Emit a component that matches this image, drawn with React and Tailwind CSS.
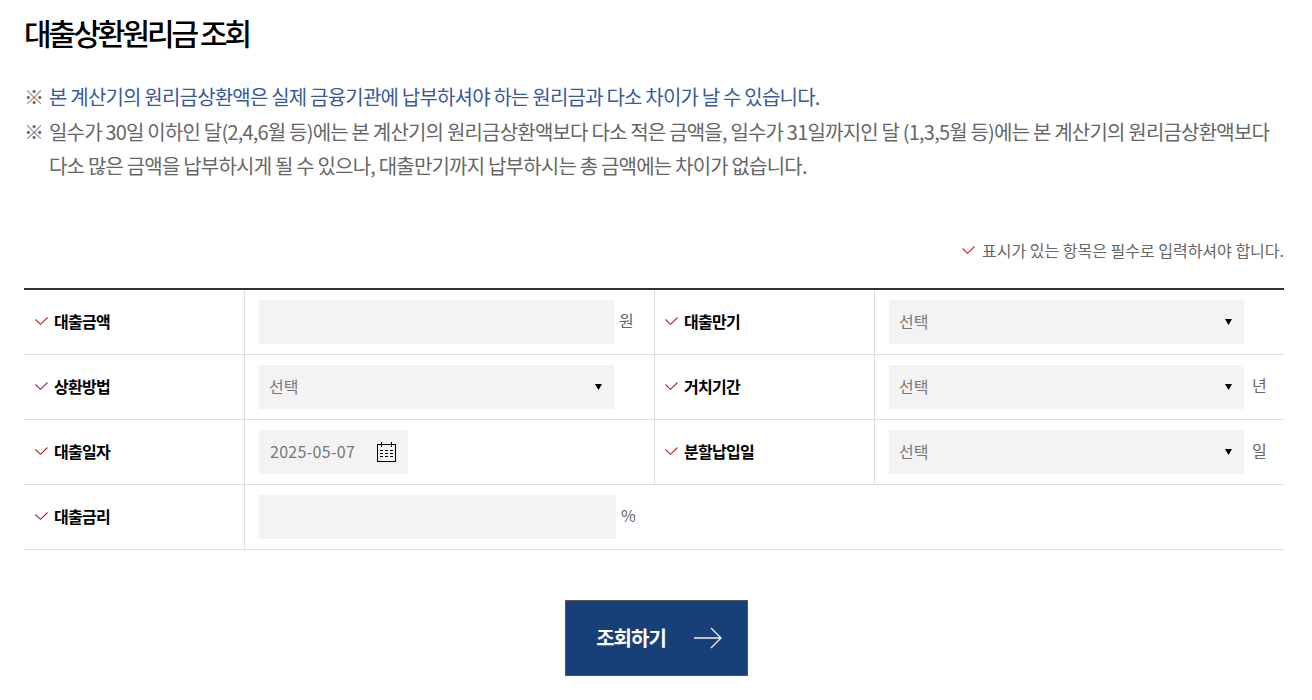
import React from 'react';

const font = 'font-["Noto_Sans_CJK_KR","Noto_Sans",sans-serif]';

const Check = ({ className = '' }) => (
  <svg width="13" height="8" viewBox="0 0 13 8" fill="none" className={className}>
    <path d="M0.5 2.5 L5.5 7.3 L12.5 0.5" stroke="#b0222c" strokeWidth="1.1" />
  </svg>
);

const Label = ({ children, right }) => (
  <div className={`flex items-center gap-[6px] border-r border-b border-[#dddddd] ${right ? 'pl-[10px]' : 'pl-[11px]'}`}>
    <Check className="-mt-[2px]" />
    <span className="text-[16px] -mt-[2px] font-bold text-black tracking-[-0.7px]">{children}</span>
  </div>
);

const Select = ({ width }) => (
  <div className={`${width} h-[44px] bg-[#f3f3f3] flex items-center justify-between pl-[10px] pr-[12px]`}>
    <span className="text-[16px] -mt-[2px] text-[#777777]">선택</span>
    <svg width="7" height="6" viewBox="0 0 7 6"><path d="M0 0 H7 L3.5 6 Z" fill="#000" /></svg>
  </div>
);

const CalendarIcon = () => (
  <svg width="20" height="20" viewBox="0 0 20 20" fill="none" stroke="#000">
    <rect x="0.5" y="2.5" width="18" height="17" />
    <path d="M4.5 0 V5 M14.5 0 V5" />
    <path d="M3 8.5 H6 M8 8.5 H11 M13 8.5 H16 M3 11.5 H6 M8 11.5 H11 M13 11.5 H16 M3 14.5 H6 M8 14.5 H11 M13 14.5 H16" />
  </svg>
);

const Cell = ({ children, border }) => (
  <div className={`flex items-center pl-[14px] border-b border-[#dddddd] ${border ? 'border-r' : ''}`}>
    {children}
  </div>
);

const Unit = ({ children, className = '' }) => (
  <span className={`text-[16px] text-[#666666] -mt-[4px] ${className}`}>{children}</span>
);

export default function App() {
  return (
    <div className={`${font} bg-white h-[700px] overflow-hidden pl-6 pr-[28px]`}>
      <h1 className="pt-[10px] text-[30px] leading-[44px] font-medium text-black tracking-[-3px]">대출상환원리금 조회</h1>

      <ul className="mt-[26px] h-[104px] text-[20px] leading-[34.5px] tracking-[-0.8px] text-[#666666]">
        <li className="flex">
          <span className="w-[25px] shrink-0">※</span>
          <span className="text-[#38599c]">본 계산기의 원리금상환액은 실제 금융기관에 납부하셔야 하는 원리금과 다소 차이가 날 수 있습니다.</span>
        </li>
        <li className="flex">
          <span className="w-[25px] shrink-0">※</span>
          <span>일수가 30일 이하인 달(2,4,6월 등)에는 본 계산기의 원리금상환액보다 다소 적은 금액을, 일수가 31일까지인 달 (1,3,5월 등)에는 본 계산기의 원리금상환액보다 다소 많은 금액을 납부하시게 될 수 있으나, 대출만기까지 납부하시는 총 금액에는 차이가 없습니다.</span>
        </li>
      </ul>

      <div className="mt-[54px] flex items-center justify-end gap-[7px] text-[16px] leading-[24px] text-[#666666]">
        <Check className="-mt-[1px]" />
        <span>표시가 있는 항목은 필수로 입력하셔야 합니다.</span>
      </div>

      <div className="mt-[26px] border-t-2 border-[#333333] grid grid-cols-[221px_410px_220px_1fr] auto-rows-[65px]">
        <Label>대출금액</Label>
        <Cell border>
          <div className="w-[355px] h-[44px] bg-[#f3f3f3]" />
          <Unit className="ml-[5px]">원</Unit>
        </Cell>
        <Label right>대출만기</Label>
        <Cell>
          <Select width="w-[355px]" />
        </Cell>

        <Label>상환방법</Label>
        <Cell border>
          <Select width="w-[355px]" />
        </Cell>
        <Label right>거치기간</Label>
        <Cell>
          <Select width="w-[355px]" />
          <Unit className="ml-[8px]">년</Unit>
        </Cell>

        <Label>대출일자</Label>
        <Cell border>
          <div className="w-[149px] h-[44px] bg-[#f3f3f3] flex items-center justify-between pl-[11px] pr-[11px]">
            <span className="text-[16px] -mt-[2px] tracking-[0.3px] text-[#777777]">2025-05-07</span>
            <CalendarIcon />
          </div>
        </Cell>
        <Label right>분할납입일</Label>
        <Cell>
          <Select width="w-[355px]" />
          <Unit className="ml-[8px]">일</Unit>
        </Cell>

        <Label>대출금리</Label>
        <div className="col-span-3 flex items-center pl-[14px] border-b border-[#dddddd]">
          <div className="w-[357px] h-[44px] bg-[#f3f3f3]" />
          <Unit className="ml-[5px]">%</Unit>
        </div>
      </div>

      <div className="mt-[50px] pl-[5px] flex justify-center">
        <button className="w-[183px] h-[76px] pl-[5px] bg-[#173f78] border border-[#555555] flex items-center justify-center gap-[28px] text-white text-[20px] font-bold tracking-[-1px]">
          <span>조회하기</span>
          <svg width="28" height="22" viewBox="0 0 28 22" fill="none" stroke="#f0f0f0" strokeWidth="1.3">
            <path d="M0 11 H27 M17 1 L27 11 L17 21" />
          </svg>
        </button>
      </div>
    </div>
  );
}
